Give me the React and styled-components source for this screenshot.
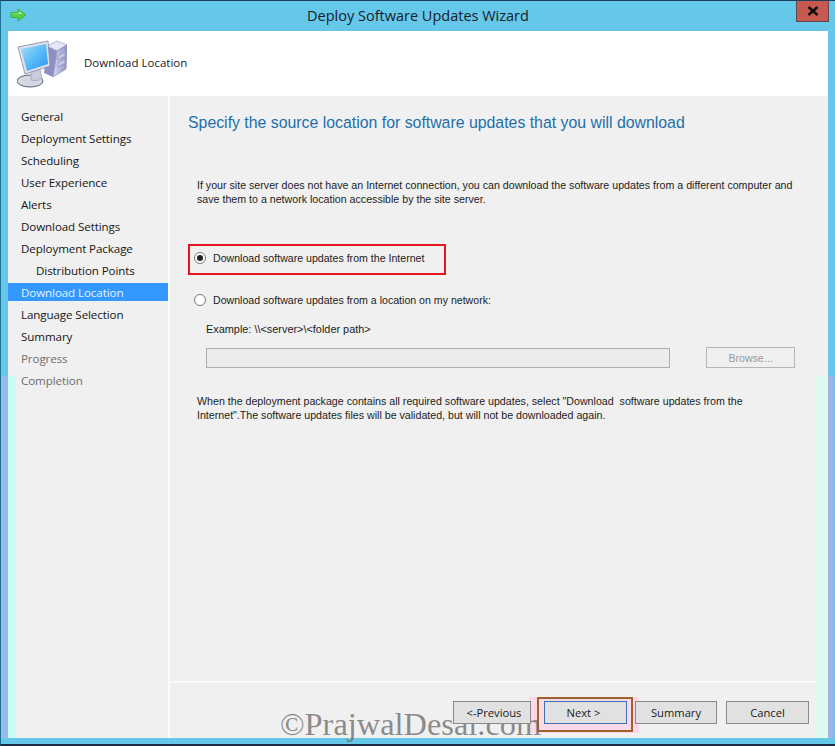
import React from "react";
import styled, { createGlobalStyle } from "styled-components";

const Global = createGlobalStyle`
  html, body { margin: 0; padding: 0; background: #1d3448; }
  #root { width: 835px; height: 746px; overflow: hidden; }
`;
const Windowed = styled.div`
  position: relative; width: 835px; height: 746px; box-sizing: border-box;
  display: flex; flex-direction: column; overflow: hidden;
  background: #66c8e9;
  border-top: 1px solid #1d3f58; border-bottom: 2px solid #1d2c44; border-left: 1px solid #1f6f92;
  font-family: "Liberation Sans", Arial, sans-serif; color: #111;
`;
const TitleBar = styled.div`
  height: 30px; flex: none; box-sizing: border-box; padding-bottom: 2px; display: flex; align-items: center; justify-content: center;
  font-family: "Open Sans", sans-serif; font-size: 14.5px; color: #16202a;
`;
const AppIcon = styled.svg`position: absolute; left: 9px; top: 7px;`;
const CloseButton = styled.div`
  position: absolute; right: 6px; top: 0; width: 33px; height: 21px; box-sizing: border-box;
  background: #c75a50; border: 1px solid #5a4a50; border-top: none;
  display: flex; align-items: center; justify-content: center;
`;
const Client = styled.div`
  flex: 1; margin: 0 7px 6px 7px; display: flex; flex-direction: column; background: #f0f0f0; min-height: 0;
`;
const Header = styled.div`
  height: 65px; flex: none; background: #fff; display: flex; align-items: center; padding-left: 9px; gap: 17px;
  font-family: "Open Sans", sans-serif; font-size: 11.5px; color: #1a1a1a;
`;
const HeaderLabel = styled.span`padding-bottom: 2px;`;
const Body = styled.div`flex: 1; display: flex; min-height: 0;`;
const Sidebar = styled.nav`
  width: 162px; flex: none; box-sizing: border-box; padding-top: 9px; border-right: 2px solid #fbfbfb;
`;
const NavItem = styled.div`
  height: 22px; display: flex; align-items: center; box-sizing: border-box;
  padding-left: ${p => (p.$indent ? 28 : 13)}px;
  font-family: "Open Sans", sans-serif; font-size: 11.6px; letter-spacing: -0.1px;
  color: ${p => (p.$disabled ? "#6e6e6e" : p.$active ? "#e4f1ff" : "#161616")};
  background: ${p => (p.$active
    ? "linear-gradient(#f0f0f0 0 2px, #3399ff 2px 20px, #f0f0f0 20px)"
    : "transparent")};
`;
const Main = styled.div`flex: 1; display: flex; flex-direction: column; min-width: 0;`;
const Content = styled.div`flex: 1; box-sizing: border-box; padding: 17px 33px 0 18px; min-height: 0;`;
const Heading = styled.h1`
  margin: 0; font-weight: 400; font-size: 15.85px; line-height: 20px; color: #1c6fa9; white-space: nowrap;
`;
const Paragraph = styled.p`
  margin: ${p => p.$top}px 0 0 9px; font-size: 10.65px; line-height: 14px; color: #1c1c1c; width: 600px;
`;
const Options = styled.div`margin-top: 38px; display: flex; flex-direction: column;`;
const Highlight = styled.div`
  width: 258px; height: 31px; box-sizing: border-box; border: 2px solid #e8141c;
  display: flex; align-items: flex-start; padding: 4px 0 0 4px;
`;
const Option = styled.label`
  display: flex; align-items: center; gap: 7px; height: 16px; font-size: 10.6px; color: #1c1c1c;
  margin: ${p => (p.$plain ? "17px 0 0 6px" : "0")};
`;
const Radio = styled.span`
  width: 12px; height: 12px; box-sizing: border-box; border-radius: 50%; flex: none;
  border: 1px solid #777; background: #fff; display: flex; align-items: center; justify-content: center;
  &::after { content: ""; width: 6px; height: 6px; border-radius: 50%; background: ${p => (p.$on ? "#222" : "transparent")}; }
`;
const Example = styled.div`margin: 14px 0 0 18px; font-size: 10.9px; line-height: 14px; color: #1c1c1c;`;
const InputRow = styled.div`display: flex; align-items: flex-start; margin: 12px 0 0 18px; gap: 36px;`;
const PathInput = styled.div`
  width: 464px; height: 20px; box-sizing: border-box; border: 1px solid #aeaeae; background: #ececec;
`;
const Browse = styled.div`
  width: 89px; height: 21px; box-sizing: border-box; border: 1px solid #b5b5b5; margin-top: -1px;
  display: flex; align-items: center; justify-content: center;
  font-size: 10.6px; color: #9a9a9a; background: #efefef;
`;
const Footer = styled.div`
  height: 57px; flex: none; box-sizing: border-box; border-top: 2px solid #fbfbfb;
  display: flex; align-items: flex-start; padding: 18px 19px 0 0; justify-content: flex-end;
`;
const ButtonRow = styled.div`position: relative; display: flex; gap: 8px; z-index: 1;`;
const Button = styled.div`
  width: ${p => p.$w}px; height: 23px; box-sizing: border-box; flex: none;
  border: 1px solid ${p => (p.$primary ? "#3f6fb5" : "#8a8a8a")};
  background: #e1e1e1; display: flex; align-items: center; justify-content: center;
  font-family: "Open Sans", sans-serif; font-size: 11.2px; color: #1a1a1a;
  margin-left: ${p => p.$gap || 0}px;
  padding-left: ${p => p.$nudge > 0 ? p.$nudge : 0}px;
  padding-right: ${p => p.$nudge < 0 ? -p.$nudge : 0}px;
`;
const Band = styled.div`
  position: absolute; top: 375px; bottom: 6px; left: ${p => p.$x}px; width: ${p => p.$w}px; background: ${p => p.$c};
`;
const Halo = styled.div`
  position: absolute; left: 528px; top: 696px; width: 110px; height: 36px; background: #fbd9e6;
`;
const NextFrame = styled.div`
  position: absolute; left: 536px; top: 696px; width: 96px; height: 35px; box-sizing: border-box;
  border: 2px solid #a2602c;
`;
const Watermark = styled.div`
  position: absolute; left: 279px; top: 703px; font-family: "Liberation Serif", serif; font-size: 32.4px; line-height: 40px;
  color: rgba(110, 110, 110, 0.78); white-space: nowrap;
`;

const Arrow = () => (
  <AppIcon width="17" height="14" viewBox="0 0 17 14">
    <path d="M1 4.500h7V1l8 6-8 6V9.500H1z" fill="#56d04a" stroke="#3aa83a" strokeWidth="0.8" />
    <path d="M2 5.500h7V3l4 3H2z" fill="#a8f08a" />
  </AppIcon>
);

const Computer = () => (
  <svg width="50" height="48" viewBox="0 0 50 48">
    <defs>
      <linearGradient id="scr" x1="0" y1="0" x2="1" y2="1">
        <stop offset="0" stopColor="#a4e0fb" />
        <stop offset="0.5" stopColor="#58bdf6" />
        <stop offset="1" stopColor="#2c90ea" />
      </linearGradient>
      <linearGradient id="tow" x1="0" y1="0" x2="1" y2="0">
        <stop offset="0" stopColor="#d6d8f2" />
        <stop offset="1" stopColor="#8f91c8" />
      </linearGradient>
    </defs>
    <path d="M30 6l10-5 10 4-10 6z" fill="#e4e5f7" stroke="#8f91b4" strokeWidth="0.6" />
    <path d="M40 11l10-6-1 24-13 8z" fill="url(#tow)" stroke="#7d7fa8" strokeWidth="0.6" />
    <path d="M30 6l10 5-4 26-9-4z" fill="#8e90c4" />
    <path d="M41 16l7-4v4l-7 4zM41 23l7-4v4l-7 4z" fill="#c9cbe9" stroke="#7d7fa8" strokeWidth="0.5" />
    <ellipse cx="13" cy="41" rx="13" ry="6" fill="#d5d8e2" stroke="#5f6478" />
    <path d="M14 31l9-2 2 9c-3 3-8 3-11 2z" fill="#c9ccda" stroke="#8a8fa0" strokeWidth="0.5" />
    <path d="M1 7l30-6 2 25-25 8z" fill="#dfe1ec" stroke="#8387a0" strokeWidth="0.8" />
    <path d="M4 9l25-5 2 20-21 7z" fill="url(#scr)" />
  </svg>
);

const nav = [
  ["General"], ["Deployment Settings"], ["Scheduling"], ["User Experience"], ["Alerts"],
  ["Download Settings"], ["Deployment Package"], ["Distribution Points", "indent"],
  ["Download Location", "active"], ["Language Selection"], ["Summary"],
  ["Progress", "disabled"], ["Completion", "disabled"],
];

export default function App() {
  return (
    <Windowed>
      <Global />
      <Arrow />
      <TitleBar>Deploy Software Updates Wizard</TitleBar>
      <CloseButton>
        <svg width="12" height="10" viewBox="0 0 12 10"><path d="M1.500 1l9 8M10.500 1l-9 8" stroke="#111" strokeWidth="2.600" /></svg>
      </CloseButton>
      <Client>
        <Header><Computer /><HeaderLabel>Download Location</HeaderLabel></Header>
        <Body>
          <Sidebar>
            {nav.map(([t, k]) => (
              <NavItem key={t} $indent={k === "indent"} $active={k === "active"} $disabled={k === "disabled"}>{t}</NavItem>
            ))}
          </Sidebar>
          <Main>
            <Content>
              <Heading>Specify the source location for software updates that you will download</Heading>
              <Paragraph $top={45}>
                If your site server does not have an Internet connection, you can download the software updates from a different computer and save them to a network location accessible by the site server.
              </Paragraph>
              <Options>
                <Highlight>
                  <Option><Radio $on />Download software updates from the Internet</Option>
                </Highlight>
                <Option $plain><Radio />Download software updates from a location on my network:</Option>
              </Options>
              <Example>Example: \\&lt;server&gt;\&lt;folder path&gt;</Example>
              <InputRow><PathInput /><Browse>Browse...</Browse></InputRow>
              <Paragraph $top={26}>
                When the deployment package contains all required software updates, select "Download&nbsp; software updates from the Internet".The software updates files will be validated, but will not be downloaded again.
              </Paragraph>
            </Content>
            <Footer>
              <ButtonRow>
                <Button $w={78} $nudge={4}>&lt;-Previous</Button>
                <Button $w={83} $primary $gap={5} $nudge={-4}>Next &gt;</Button>
                <Button $w={82}>Summary</Button>
                <Button $w={83} $gap={1}>Cancel</Button>
              </ButtonRow>
            </Footer>
          </Main>
        </Body>
      </Client>
      <Band $x={-1} $w={8} $c="#9cb9e8" />
      <Band $x={7} $w={8} $c="#c8fbf3" />
      <Band $x={815} $w={12} $c="#e0f8f0" />
      <Band $x={827} $w={5} $c="#a0b4e6" />
      <Halo />
      <NextFrame />
      <Watermark>©PrajwalDesai.com</Watermark>
    </Windowed>
  );
}
